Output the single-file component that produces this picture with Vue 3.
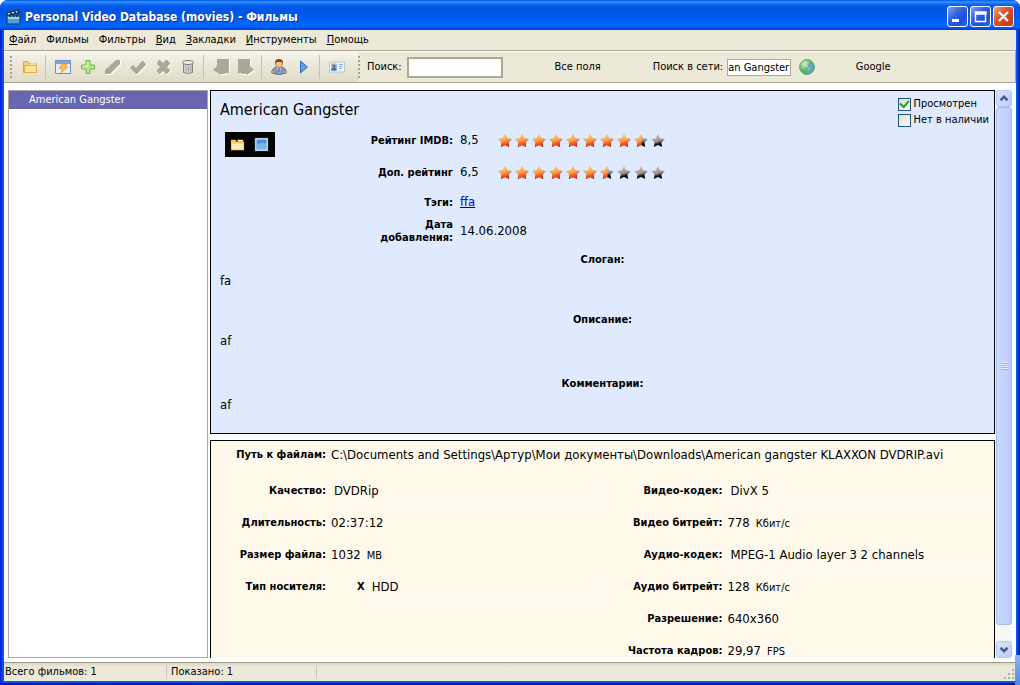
<script setup>
import { ref } from 'vue'

const menu = [
  ['Ф', 'айл'],
  ['', 'Фильмы'],
  ['', 'Фильтры'],
  ['В', 'ид'],
  ['З', 'акладки'],
  ['И', 'нструменты'],
  ['П', 'омощь']
]

const movies = ref(['American Gangster'])
const query = ref('')
const webQuery = ref('an Gangster')
const seen = ref(true)
const missing = ref(false)

const star = 'M8 1 L10.1 5.3 L14.8 6 L11.4 9.4 L12.2 14 L8 11.9 L3.8 14 L4.6 9.4 L1.2 6 L5.9 5.3 Z'
const ratings = [
  { id: 'imdb', label: 'Рейтинг IMDB:', value: '8,5', score: 8.5 },
  { id: 'extra', label: 'Доп. рейтинг', value: '6,5', score: 6.5 }
]

const notes = [
  { title: 'Слоган:', text: 'fa' },
  { title: 'Описание:', text: 'af' },
  { title: 'Комментарии:', text: 'af' }
]

const left = [
  { id: 'quality', label: 'Качество:', value: 'DVDRip', box: true },
  { id: 'length', label: 'Длительность:', value: '02:37:12' },
  { id: 'size', label: 'Размер файла:', value: '1032', unit: 'MB' },
  { id: 'media', label: 'Тип носителя:', value: 'HDD', box: true, mark: 'X' }
]
const right = [
  { id: 'vcodec', label: 'Видео-кодек:', value: 'DivX 5', box: true },
  { id: 'vrate', label: 'Видео битрейт:', value: '778', unit: 'Кбит/с' },
  { id: 'acodec', label: 'Аудио-кодек:', value: 'MPEG-1 Audio layer 3 2 channels', box: true },
  { id: 'arate', label: 'Аудио битрейт:', value: '128', unit: 'Кбит/с' },
  { id: 'res', label: 'Разрешение:', value: '640x360' },
  { id: 'fps', label: 'Частота кадров:', value: '29,97', unit: 'FPS' }
]
</script>

<template>
  <div class="window">
    <header class="titlebar">
      <svg class="app-icon" width="16" height="16" viewBox="0 0 16 16">
        <path d="M1 6h13v9H1z" fill="#4f9fd0" stroke="#123a5c" />
        <path d="M2 8h11v2H2z" fill="#9fd4ee" />
        <path d="M1 4 13.500 0.800 14.200 3.300 1.700 6.200z" fill="#e8f2f8" stroke="#0d2840" />
        <path d="M4 3.300 6 5M8 2.300 10 4M11.500 1.500 13 3.200M4 6v2M7.500 6v2M11 6v2" stroke="#0d2840" stroke-width="1.600" />
      </svg>
      <h1>Personal Video Database (movies) - Фильмы</h1>
      <div class="caption-buttons">
        <button aria-label="Свернуть"><svg width="19" height="19" viewBox="0 0 19 19"><path d="M4 12h7v3H4z" fill="#fff" /></svg></button>
        <button aria-label="Развернуть"><svg width="19" height="19" viewBox="0 0 19 19"><path d="M4.500 5.500h10v9h-10zM4 5h11v2H4" fill="none" stroke="#fff" stroke-width="1.400" /></svg></button>
        <button class="close" aria-label="Закрыть"><svg width="19" height="19" viewBox="0 0 19 19"><path d="M5 5 14 14M14 5 5 14" stroke="#fff" stroke-width="2.200" /></svg></button>
      </div>
    </header>

    <div class="client">
      <nav class="menubar">
        <button v-for="m in menu" :key="m[1]"><u v-if="m[0]">{{ m[0] }}</u>{{ m[1] }}</button>
      </nav>

      <div class="toolbar">
        <div class="band tools">
          <i class="grip"></i>
          <button aria-label="Открыть">
            <svg viewBox="0 0 16 16"><path d="M1.500 13.500v-11h4l1.500 2h7v9z" fill="#f9cf63" stroke="#dda63a" /><path d="M3 6.500h11.500v7H2.500z" fill="#fee79b" stroke="#e2ae45" /><path d="M8 4.500h5v1H8z" fill="#fff" /></svg>
          </button>
          <i class="sep"></i>
          <button aria-label="Быстрый фильтр">
            <svg viewBox="0 0 16 16"><path d="M.5 1.500h15v13H.5z" fill="#e4edf8" stroke="#6e90c4" /><path d="M1 2h14v3H1z" fill="#7fa5dc" /><path d="M7 5h5L10 8h3l-7 6 1.500-4.500H4z" fill="#fbc34c" stroke="#e99b22" stroke-width=".7" /></svg>
          </button>
          <button aria-label="Добавить">
            <svg viewBox="0 0 16 16"><path d="M6 1.500h4V6h4.500v4H10v4.500H6V10H1.500V6H6z" fill="#bce38a" stroke="#73b443" /><path d="M7 3h1v4H3" fill="none" stroke="#e4f7cd" /></svg>
          </button>
          <button aria-label="Изменить" class="off">
            <svg viewBox="0 0 16 16"><path d="M0 15v-4L11 1h4v4L5 15z" /></svg>
          </button>
          <button aria-label="Применить" class="off">
            <svg viewBox="0 0 16 16"><path d="M0 9 3 6l3 3 6-7h1l3 3v1L7 15H6z" /></svg>
          </button>
          <button aria-label="Отменить" class="off">
            <svg viewBox="0 0 16 16"><path d="M2 4 4 1h1l3 3 3-3h1l3 3v1l-3 3 3 3v1l-3 3h-1l-3-3-3 3H4l-2-3v-1l3-3-3-3z" /></svg>
          </button>
          <button aria-label="Удалить">
            <svg viewBox="0 0 16 16"><path d="M3.500 4v9.500q4.500 2 9 0V4z" fill="#d4d4d4" stroke="#858585" /><path d="M6 6.500v6M8.500 7v6M11 6.500v6" stroke="#999" /><ellipse cx="8" cy="3.500" rx="5.500" ry="2" fill="#eee" stroke="#777" /><path d="M6 1.500h4" stroke="#777" /></svg>
          </button>
          <i class="sep"></i>
          <button aria-label="Назад" class="off">
            <svg viewBox="0 0 16 16"><path d="M4 0h12v15l-2-1-3 1H8v1l-8-5 4-4z" /></svg>
          </button>
          <button aria-label="Вперёд" class="off">
            <svg viewBox="0 0 16 16"><path d="M12 0H0v15l2-1 3 1h4v1l7-5-4-4z" /></svg>
          </button>
          <i class="sep"></i>
          <button aria-label="Люди">
            <svg viewBox="0 0 16 16"><path d="M1 12q1-4 7-4t7 4v2q-7 3-14 0z" fill="#6f9fd6" stroke="#4774ad" /><path d="M6 8.500 8 14l2-5.500z" fill="#fff" /><path d="M8 9v4" stroke="#c4422d" stroke-width="1.500" /><circle cx="8" cy="5" r="3.500" fill="#f3bd8c" stroke="#a8643a" stroke-width=".7" /><path d="M4 5q-.5-5 4-5t4 5l-1.500-2h-5z" fill="#85451f" /><path d="M0 14q0-3 3-2l1 2zM16 14q0-3-3-2l-1 2z" fill="#eab184" stroke="#ad6539" stroke-width=".5" /></svg>
          </button>
          <button aria-label="Воспроизвести">
            <svg viewBox="0 0 16 16"><path d="M4.500 2v12L11.500 8z" fill="#5aa0ee" stroke="#2f6fca" stroke-linejoin="round" /></svg>
          </button>
          <i class="sep"></i>
          <button aria-label="Карточка">
            <svg viewBox="0 0 16 16"><path d="M.5 3h15v10H.500z" fill="#edf3f8" stroke="#b5c7d6" /><path d="M2 4.500h6v7H2z" fill="#8cc0ea" /><circle cx="5" cy="7" r="1.600" fill="#a05d37" /><path d="M2.500 11.500q0-3 2.500-3t2.500 3z" fill="#376faa" /><path d="M10 5.500h4M10 7.500h4M10 9.500h3" stroke="#8babc6" /></svg>
          </button>
        </div>
        <div class="band search">
          <i class="grip"></i>
          <label for="query">Поиск:</label>
          <input id="query" v-model="query" class="query" type="text" />
          <button class="choice scope">Все поля</button>
          <label for="web">Поиск в сети:</label>
          <input id="web" v-model="webQuery" class="web" type="text" />
          <button class="globe" aria-label="Искать в сети">
            <svg viewBox="0 0 16 16"><defs><radialGradient id="globe" cx=".35" cy=".3"><stop offset="0" stop-color="#d6f3bd" /><stop offset="1" stop-color="#55ad5a" /></radialGradient></defs><circle cx="8" cy="8" r="7.400" fill="url(#globe)" stroke="#5da868" /><path d="M11 2q4 3 3.500 7-2 5-6 5.500-4-2-2-5l3-1 0-3z" fill="#5aa5d3" /><path d="M9 9q3-2 3 0t-3 3z" fill="#80cc77" /></svg>
          </button>
          <button class="choice engine">Google</button>
        </div>
      </div>

      <main class="content">
        <ul class="list">
          <li v-for="m in movies" :key="m">{{ m }}</li>
        </ul>

        <div class="pane">
          <section class="card info">
            <div class="head">
              <h2>American Gangster</h2>
              <div class="flags">
                <label><input v-model="seen" type="checkbox" />Просмотрен</label>
                <label><input v-model="missing" type="checkbox" />Нет в наличии</label>
              </div>
            </div>
            <div class="summary">
              <div class="poster">
                <button aria-label="Открыть обложку"><svg viewBox="0 0 16 16"><path d="M1 14V3h5l1 2h8v9z" fill="#f8c957" /><path d="M2 7h12v6H2z" fill="#feeeb5" /><path d="M8 3h6v2H8z" fill="#fff4d3" /></svg></button>
                <button aria-label="Показать обложку"><svg viewBox="0 0 16 16"><path d="M1.500 1.500h13v13h-13z" fill="#9fc8f0" stroke="#d0e5fb" /><path d="M3 3h10v9H3z" fill="#4b93d9" /><path d="M3 8q5-3 10-1v5H3z" fill="#79b3e8" /></svg></button>
              </div>
              <dl>
                <template v-for="r in ratings" :key="r.id">
                  <dt>{{ r.label }}</dt>
                  <dd class="rating">
                    <span>{{ r.value }}</span>
                    <svg width="170" height="16" viewBox="0 -1 170 16" role="img" :aria-label="r.value">
                      <defs>
                        <linearGradient :id="r.id + '-on'" x1=".3" y1="0" x2=".6" y2="1">
                          <stop offset="0" stop-color="#ffd68c" /><stop offset=".5" stop-color="#ff9c45" /><stop offset=".7" stop-color="#f8601d" /><stop offset="1" stop-color="#ee2a08" />
                        </linearGradient>
                        <linearGradient :id="r.id + '-off'" x1=".3" y1="0" x2=".6" y2="1">
                          <stop offset="0" stop-color="#d3c3ba" /><stop offset=".55" stop-color="#a29490" /><stop offset=".75" stop-color="#1c1717" /><stop offset="1" stop-color="#000" />
                        </linearGradient>
                        <clipPath :id="r.id + '-clip'"><rect x="0" y="0" :width="r.score * 17" height="16" /></clipPath>
                      </defs>
                      <path v-for="n in 10" :key="n" :d="star" :transform="`translate(${(n - 1) * 17} 0)`" :fill="`url(#${r.id}-off)`" />
                      <g :clip-path="`url(#${r.id}-clip)`">
                        <path v-for="n in 10" :key="n" :d="star" :transform="`translate(${(n - 1) * 17} 0)`" :fill="`url(#${r.id}-on)`" />
                      </g>
                    </svg>
                  </dd>
                </template>
                <dt>Тэги:</dt>
                <dd><a href="#ffa">ffa</a></dd>
                <dt>Дата добавления:</dt>
                <dd>14.06.2008</dd>
              </dl>
            </div>
            <div class="notes">
              <section v-for="n in notes" :key="n.title">
                <h3>{{ n.title }}</h3>
                <p>{{ n.text }}</p>
              </section>
            </div>
          </section>

          <section class="card file">
            <div class="row">
              <span class="name">Путь к файлам:</span>
              <span class="value">C:\Documents and Settings\Артур\Мои документы\Downloads\American gangster KLAXXON DVDRIP.avi</span>
            </div>
            <div class="halves">
              <div v-for="(col, i) in [left, right]" :key="i">
                <div v-for="f in col" :key="f.id" class="row">
                  <label v-if="f.box" class="name" :for="f.id">{{ f.label }}</label>
                  <span v-else class="name">{{ f.label }}</span>
                  <b v-if="f.mark" class="mark">{{ f.mark }}</b>
                  <input v-if="f.box" :id="f.id" class="box" type="text" readonly :value="f.value" />
                  <span v-else class="value">{{ f.value }}<small v-if="f.unit">{{ f.unit }}</small></span>
                </div>
              </div>
            </div>
          </section>
        </div>

        <div class="scrollbar">
          <button aria-label="Вверх"><svg viewBox="0 0 16 16"><path d="M4 10 8 6l4 4" /></svg></button>
          <div class="thumb"><i></i></div>
          <button aria-label="Вниз"><svg viewBox="0 0 16 16"><path d="M4 6l4 4 4-4" /></svg></button>
        </div>
      </main>

      <footer class="status">
        <span>Всего фильмов: 1</span>
        <span>Показано: 1</span>
        <svg class="resize" width="12" height="12" viewBox="0 0 12 12"><path d="M9 1h2v2H9zM5 5h2v2H5zM9 5h2v2H9zM1 9h2v2H1zM5 9h2v2H5zM9 9h2v2H9z" fill="#b8b4a2" /></svg>
      </footer>
    </div>
  </div>
</template>

<style>
html,
body {
  margin: 0;
  background: #fff;
}
</style>

<style scoped>
* {
  box-sizing: border-box;
}
h1, h2, h3, p, dl, dd, ul {
  margin: 0;
  padding: 0;
}
button {
  margin: 0;
  padding: 0;
  border: 0;
  background: none;
  font: inherit;
  color: inherit;
}
input {
  font: inherit;
  color: inherit;
  outline: none;
}
.window {
  position: relative;
  display: flex;
  flex-direction: column;
  height: 100vh;
  padding: 0 4px 4px;
  border-radius: 8px 8px 0 0;
  overflow: hidden;
  background: linear-gradient(90deg, #0019cf, #0a55e8 3px, #0a55e8 calc(100% - 3px), #00138c);
  box-shadow: inset 0 -2px #0019a8;
  font: 11px/14px "DejaVu Sans Condensed", "DejaVu Sans", sans-serif;
  color: #000;
}
.window::after {
  content: "";
  position: absolute;
  right: 0;
  bottom: 0;
  width: 5px;
  height: 30px;
  background: linear-gradient(#8db4f2, #4f86e0);
}
.titlebar {
  display: flex;
  align-items: center;
  flex: none;
  height: 30px;
  margin: 0 -4px;
  padding: 3px 6px 0 6px;
  background: linear-gradient(#0058e6 0, #3a93ff 2px, #0a6bf5 4px, #0054e3 8px, #0058ea 16px, #0066ff 24px, #0060f8 27px, #003dd7 30px);
  color: #fff;
}
.app-icon {
  flex: none;
  margin-right: 3px;
}
.titlebar h1 {
  flex: 1;
  font: bold 12px/18px "DejaVu Sans Condensed", "DejaVu Sans", sans-serif;
  text-shadow: 1px 1px #0a2f8c;
}
.caption-buttons {
  display: flex;
  gap: 2px;
}
.caption-buttons button {
  width: 21px;
  height: 21px;
  border: 1px solid #fff;
  border-radius: 3px;
  background: linear-gradient(135deg, #84a5f5, #3062e0 40%, #1e4fd6 70%, #2b6bf0);
}
.caption-buttons .close {
  background: linear-gradient(135deg, #f0a08a, #dc5430 40%, #cc3d14 80%);
}
.caption-buttons svg {
  display: block;
}
.client {
  display: flex;
  flex-direction: column;
  flex: 1;
  min-height: 0;
  background: #fff;
}
.menubar {
  display: flex;
  align-items: center;
  gap: 10px;
  height: 20px;
  padding: 0 5px;
  background: #ece9d8;
}
.toolbar {
  display: flex;
  height: 33px;
  border: 1px solid #aca899;
  border-width: 1px 1px 1px 0;
  background: #ece9d8;
  box-shadow: inset 0 1px #fff;
}
.band {
  display: flex;
  align-items: center;
  padding-top: 1px;
}
.tools {
  padding-left: 6px;
  padding-right: 9px;
  background: linear-gradient(#f8f6f0, #ece9d8 40%, #e0dcc8);
}
.tools button {
  width: 25px;
  height: 24px;
}
.tools svg,
.globe svg {
  display: block;
  width: 16px;
  height: 16px;
  margin: auto;
}
.off svg {
  fill: #aca899;
  filter: drop-shadow(1px 1px #fff);
}
.grip {
  flex: none;
  width: 2px;
  height: 22px;
  margin-right: 7px;
  background: repeating-linear-gradient(#a5a293 0 2px, transparent 2px 4px);
}
.tools .grip {
  margin-right: 5px;
}
.sep {
  width: 8px;
  height: 24px;
  background: linear-gradient(#c5c2b2, #c5c2b2) 3px 0 / 1px 100% no-repeat;
}
.search {
  flex: 1;
}
.query {
  width: 96px;
  height: 21px;
  margin-left: 5px;
  border: 2px solid #aca899;
  background: #fff;
}
.choice {
  text-align: center;
}
.scope {
  width: 150px;
}
.web {
  width: 64px;
  height: 17px;
  margin-left: 4px;
  padding: 0;
  border: 1px solid #aca899;
  background: #fff;
}
.globe {
  width: 16px;
  margin-left: 8px;
}
.engine {
  width: 116px;
}
.content {
  display: flex;
  flex: 1;
  min-height: 0;
  padding: 7px 4px 4px;
}
.list {
  flex: none;
  width: 200px;
  margin-right: 2px;
  border: 1px solid #aca899;
  list-style: none;
}
.list li {
  height: 18px;
  padding-left: 20px;
  line-height: 18px;
  background: #6866b1;
  color: #fff;
}
.pane {
  display: flex;
  flex-direction: column;
  flex: 1;
  gap: 6px;
  min-width: 0;
  overflow: hidden;
}
.card {
  flex: none;
  border: 1px solid #000;
}
.info {
  background: #dfeafe;
}
.head {
  display: flex;
  justify-content: space-between;
  height: 33px;
  padding: 5px 5px 0 9px;
}
.head h2 {
  font-size: 16px;
  font-weight: normal;
  line-height: 28px;
}
.flags label {
  display: flex;
  align-items: center;
  gap: 3px;
  height: 16px;
}
.flags input {
  appearance: none;
  display: grid;
  place-items: center;
  width: 13px;
  height: 13px;
  margin: 0;
  border: 1px solid #1d5281;
  background: linear-gradient(135deg, #dddcd5, #fff);
}
.flags input:checked::after {
  content: "";
  width: 7px;
  height: 4px;
  border: solid #21a121;
  border-width: 0 0 2px 2px;
  transform: translateY(-1px) rotate(-48deg);
}
.summary {
  display: flex;
  align-items: flex-start;
}
.poster {
  display: flex;
  gap: 8px;
  margin: 8px 0 0 14px;
  padding: 5px;
  background: #000;
}
.poster button {
  width: 16px;
  height: 15px;
}
.poster svg {
  display: block;
  height: 15px;
}
.summary dl {
  display: grid;
  grid-template-columns: 88px 1fr;
  grid-template-rows: 32px 32px 28px 30px;
  align-items: center;
  column-gap: 7px;
  flex: 1;
  margin-left: 90px;
}
dt, .name, h3 {
  font-size: 11px;
  font-weight: bold;
}
dt {
  line-height: 13px;
  text-align: right;
}
dd, .value, .box, .notes p {
  font-size: 13px;
  line-height: 16px;
}
.rating {
  display: flex;
  align-items: center;
}
.rating span {
  width: 37px;
}
.summary a {
  color: #0000cc;
}
.notes {
  display: grid;
  grid-template-rows: 60px 64px 57px;
  margin-top: 6px;
  padding: 0 9px;
}
.notes h3 {
  margin-bottom: 5px;
  line-height: 16px;
  text-align: center;
}
.file {
  padding-bottom: 20px;
  background: #fff9ec;
}
.row {
  display: flex;
  align-items: center;
  height: 32px;
}
.file > .row {
  height: 28px;
  margin-bottom: 6px;
}
.name {
  flex: none;
  width: 115px;
  margin-right: 5px;
  text-align: right;
}
.value {
  white-space: nowrap;
}
.value small {
  margin-left: 6px;
  font-size: 11px;
}
.mark {
  margin-left: 26px;
  margin-right: 4px;
}
.halves {
  display: grid;
  grid-template-columns: 397fr 387fr;
}
.box {
  flex: 1;
  min-width: 0;
  height: 20px;
  margin-right: 6px;
  padding: 0 2px 2px;
  border: 1px solid #fffcf3;
  background: transparent;
}
.scrollbar {
  display: flex;
  flex-direction: column;
  flex: none;
  width: 17px;
  padding-left: 1px;
  background: #f7f7f3;
}
.scrollbar button {
  height: 17px;
  border: 1px solid #b3c8f5;
  border-radius: 3px;
  background: linear-gradient(135deg, #dae6ff, #b9cdfb);
}
.scrollbar svg {
  display: block;
  height: 15px;
  width: 14px;
  fill: none;
  stroke: #4d6185;
  stroke-width: 3;
}
.thumb {
  display: grid;
  place-items: center;
  flex: 1;
  margin-bottom: 16px;
  border: 1px solid #a4baf0;
  border-radius: 3px;
  background: linear-gradient(90deg, #cbd9fd, #c3d3fd 60%, #b7c9f8);
}
.thumb i {
  width: 7px;
  height: 8px;
  background: repeating-linear-gradient(#eef4fe 0 1px, #8cb0f8 1px 2px);
}
.status {
  display: flex;
  align-items: center;
  flex: none;
  height: 19px;
  border-top: 1px solid #9d9a8c;
  background: linear-gradient(#dcd8c6, #ece9d8 4px);
}
.status span {
  width: 163px;
  padding-left: 1px;
  border-right: 1px solid #cbc7b5;
}
.status span + span {
  width: 150px;
  padding-left: 4px;
}
.resize {
  margin: 4px 1px 0 auto;
}
</style>
